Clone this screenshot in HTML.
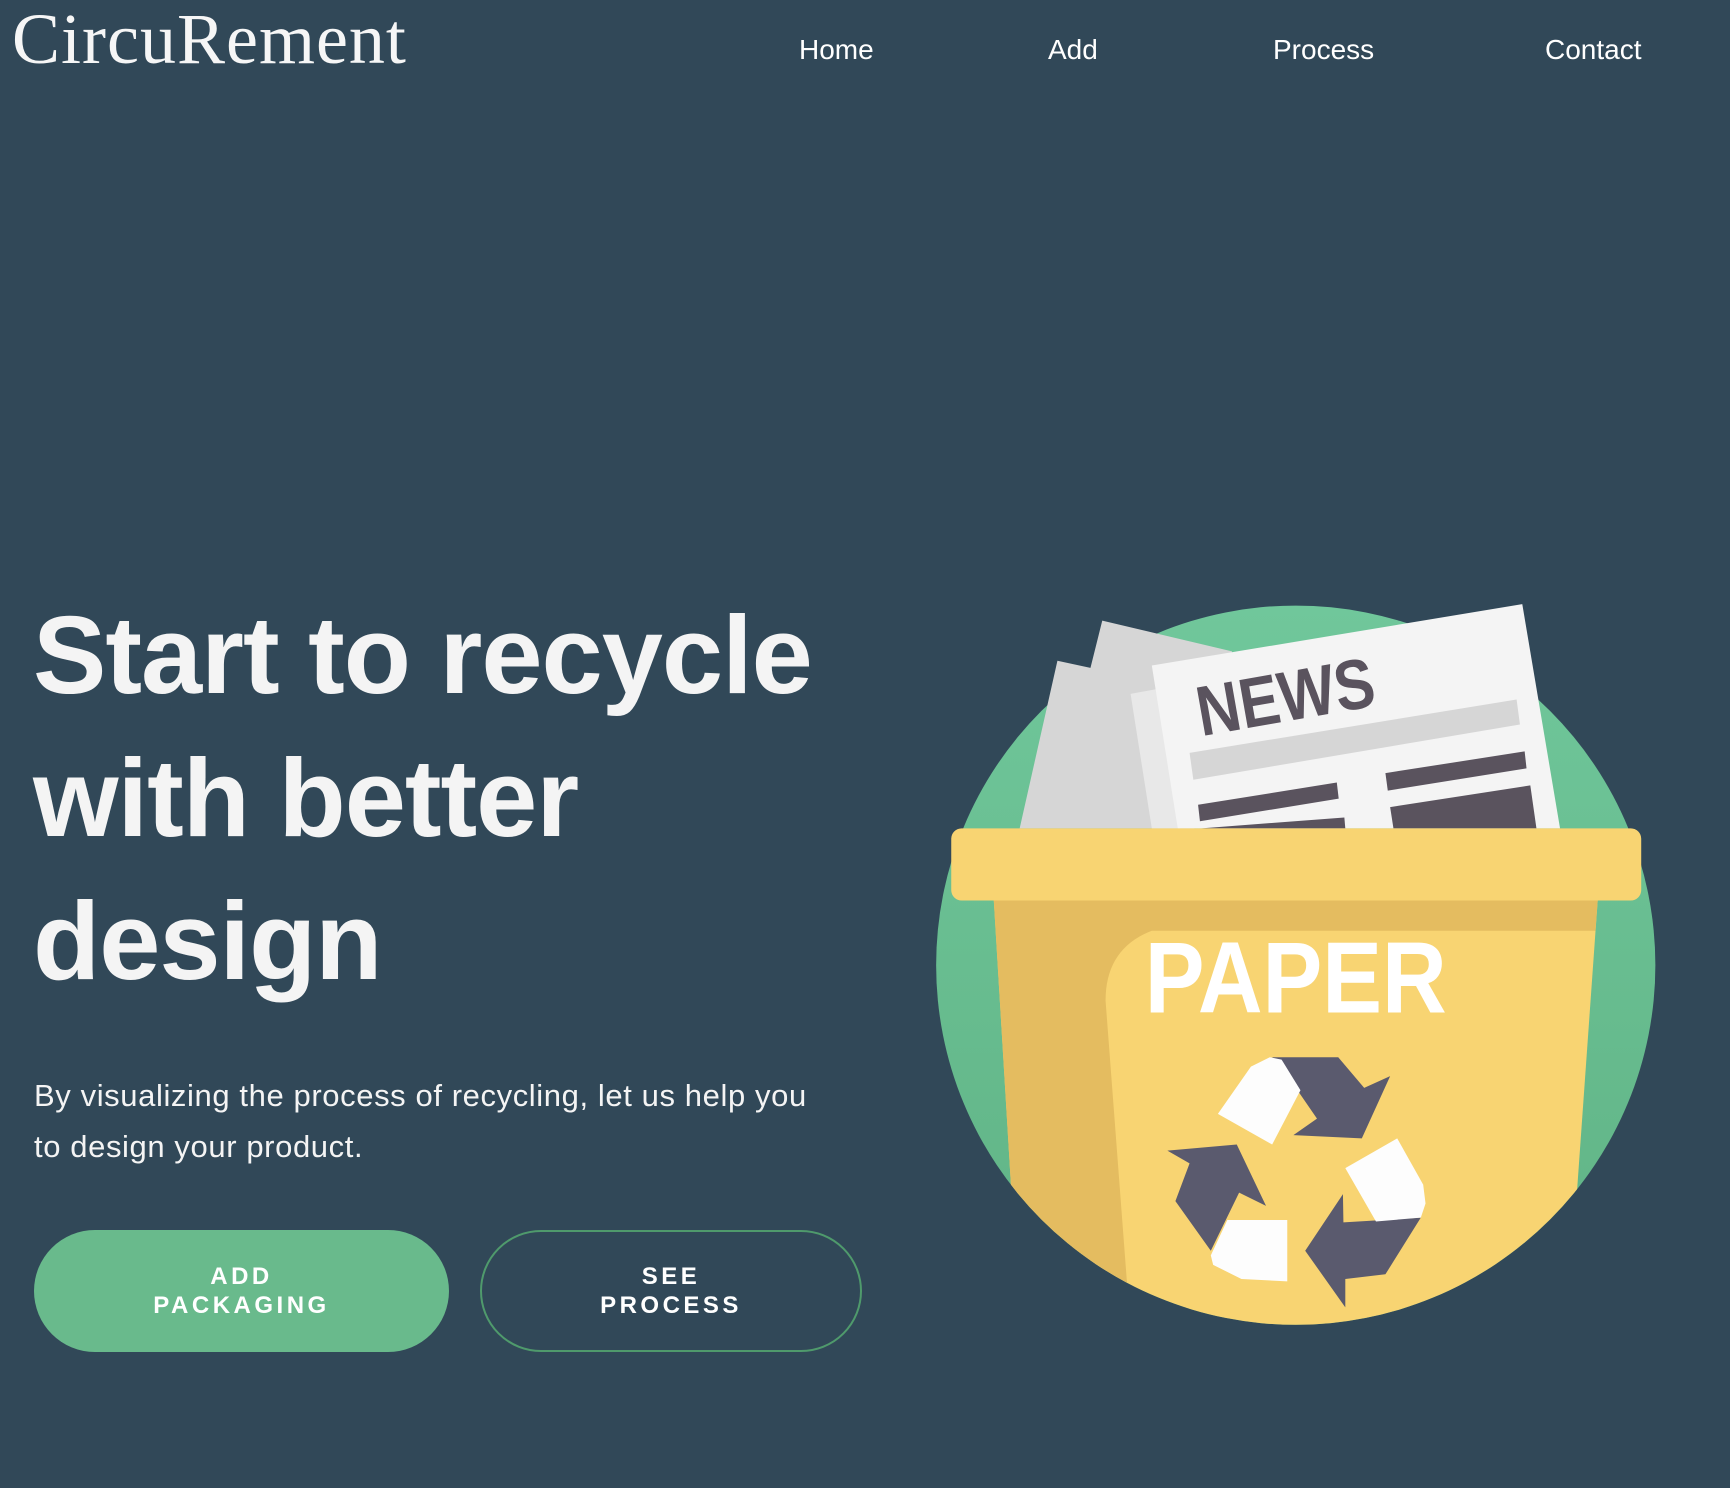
<!DOCTYPE html>
<html><head><meta charset="utf-8"><style>
html,body{margin:0;padding:0;width:1730px;height:1488px;overflow:hidden;background:#314858;font-family:"Liberation Sans",sans-serif;color:#f4f4f4}
.logo{position:absolute;left:12px;top:-2px;font-family:"Liberation Serif",serif;font-size:72px;letter-spacing:1px;color:#f6f6f6}
.nav a{position:absolute;top:34px;font-size:28px;color:#fff;text-decoration:none}
h1{position:absolute;left:33px;top:584px;margin:0;font-size:110px;line-height:143px;font-weight:bold;letter-spacing:-1px;width:950px}
p{position:absolute;left:34px;top:1070px;margin:0;font-size:31px;line-height:51px;width:800px;letter-spacing:0.6px}
.btn{position:absolute;top:1230px;height:122px;border-radius:61px;box-sizing:border-box;display:flex;align-items:center;justify-content:center;text-align:center;font-weight:bold;font-size:24px;letter-spacing:3.5px;line-height:29px;color:#fff}
.b1{left:34px;width:415px;background:#69ba8c}
.b2{left:480px;width:382px;border:2px solid #4f9a6c}
</style></head><body>
<div class="logo">CircuRement</div>
<div class="nav"><a style="left:799px">Home</a><a style="left:1048px">Add</a><a style="left:1273px">Process</a><a style="left:1545px">Contact</a></div>
<h1>Start to recycle<br>with better<br>design</h1>
<p>By visualizing the process of recycling, let us help you to design your product.</p>
<div class="btn b1">ADD<br>PACKAGING</div>
<div class="btn b2">SEE<br>PROCESS</div>
<svg style="position:absolute;left:930px;top:590px" width="740" height="740" viewBox="0 0 1568 1568">
<defs><clipPath id="c"><circle cx="775" cy="795" r="762"/></clipPath>
<linearGradient id="g" x1="0" y1="0" x2="0" y2="1"><stop offset="0" stop-color="#70c79b"/><stop offset="1" stop-color="#60b385"/></linearGradient></defs>
<circle cx="775" cy="795" r="762" fill="url(#g)"/>
<polygon points="365,65 640,130 560,505 190,505 270,150 340,165" fill="#d6d6d6"/>
<polygon points="425,220 480,210 530,505 470,505" fill="#e8e8e8"/>
<polygon points="470,160 1255,30 1335,505 525,505" fill="#f4f4f4"/>
<text x="575" y="310" transform="rotate(-10 575 310)" font-family="Liberation Sans,sans-serif" font-weight="bold" font-size="150" fill="#5a535e" textLength="380" lengthAdjust="spacingAndGlyphs">NEWS</text>
<polygon points="550,345 1243,232 1250,285 558,402" fill="#d6d6d6"/>
<polygon points="568,455 862,408 866,442 572,490" fill="#5a535e"/>
<polygon points="965,388 1260,342 1264,378 970,425" fill="#5a535e"/>
<polygon points="975,460 1272,414 1285,505 982,505" fill="#5a535e"/>
<polygon points="575,505 878,482 880,505" fill="#5a535e"/>
<g clip-path="url(#c)">
<polygon points="135,655 1415,655 1350,1568 190,1568" fill="#f8d472"/>
<path d="M135,655 L1415,655 L1410,722 L470,722 Q372,760 372,870 L425,1568 L190,1568 Z" fill="#e4bc60"/>
</g>
<rect x="45" y="505" width="1462" height="153" rx="22" fill="#f8d472"/>
<text x="455" y="895" font-family="Liberation Sans,sans-serif" font-weight="bold" font-size="215" fill="#fff" textLength="640" lengthAdjust="spacingAndGlyphs">PAPER</text>
<g fill="#5a5a6e">
<polygon points="725,990 865,990 920,1055 975,1030 915,1162 770,1155 820,1120 765,1040"/>
<polygon points="1040,1330 965,1450 880,1460 880,1520 795,1400 875,1280 876,1340"/>
<polygon points="503,1188 650,1175 712,1305 655,1277 595,1400 520,1295 550,1215"/>
</g>
<g fill="#fdfdfd">
<polygon points="610,1110 680,1010 720,990 745,995 785,1060 725,1175"/>
<polygon points="880,1225 990,1162 1045,1260 1050,1300 1040,1330 945,1338"/>
<polygon points="630,1335 757,1335 757,1465 660,1460 600,1430 595,1410"/>
</g>
</svg>
</body></html>
